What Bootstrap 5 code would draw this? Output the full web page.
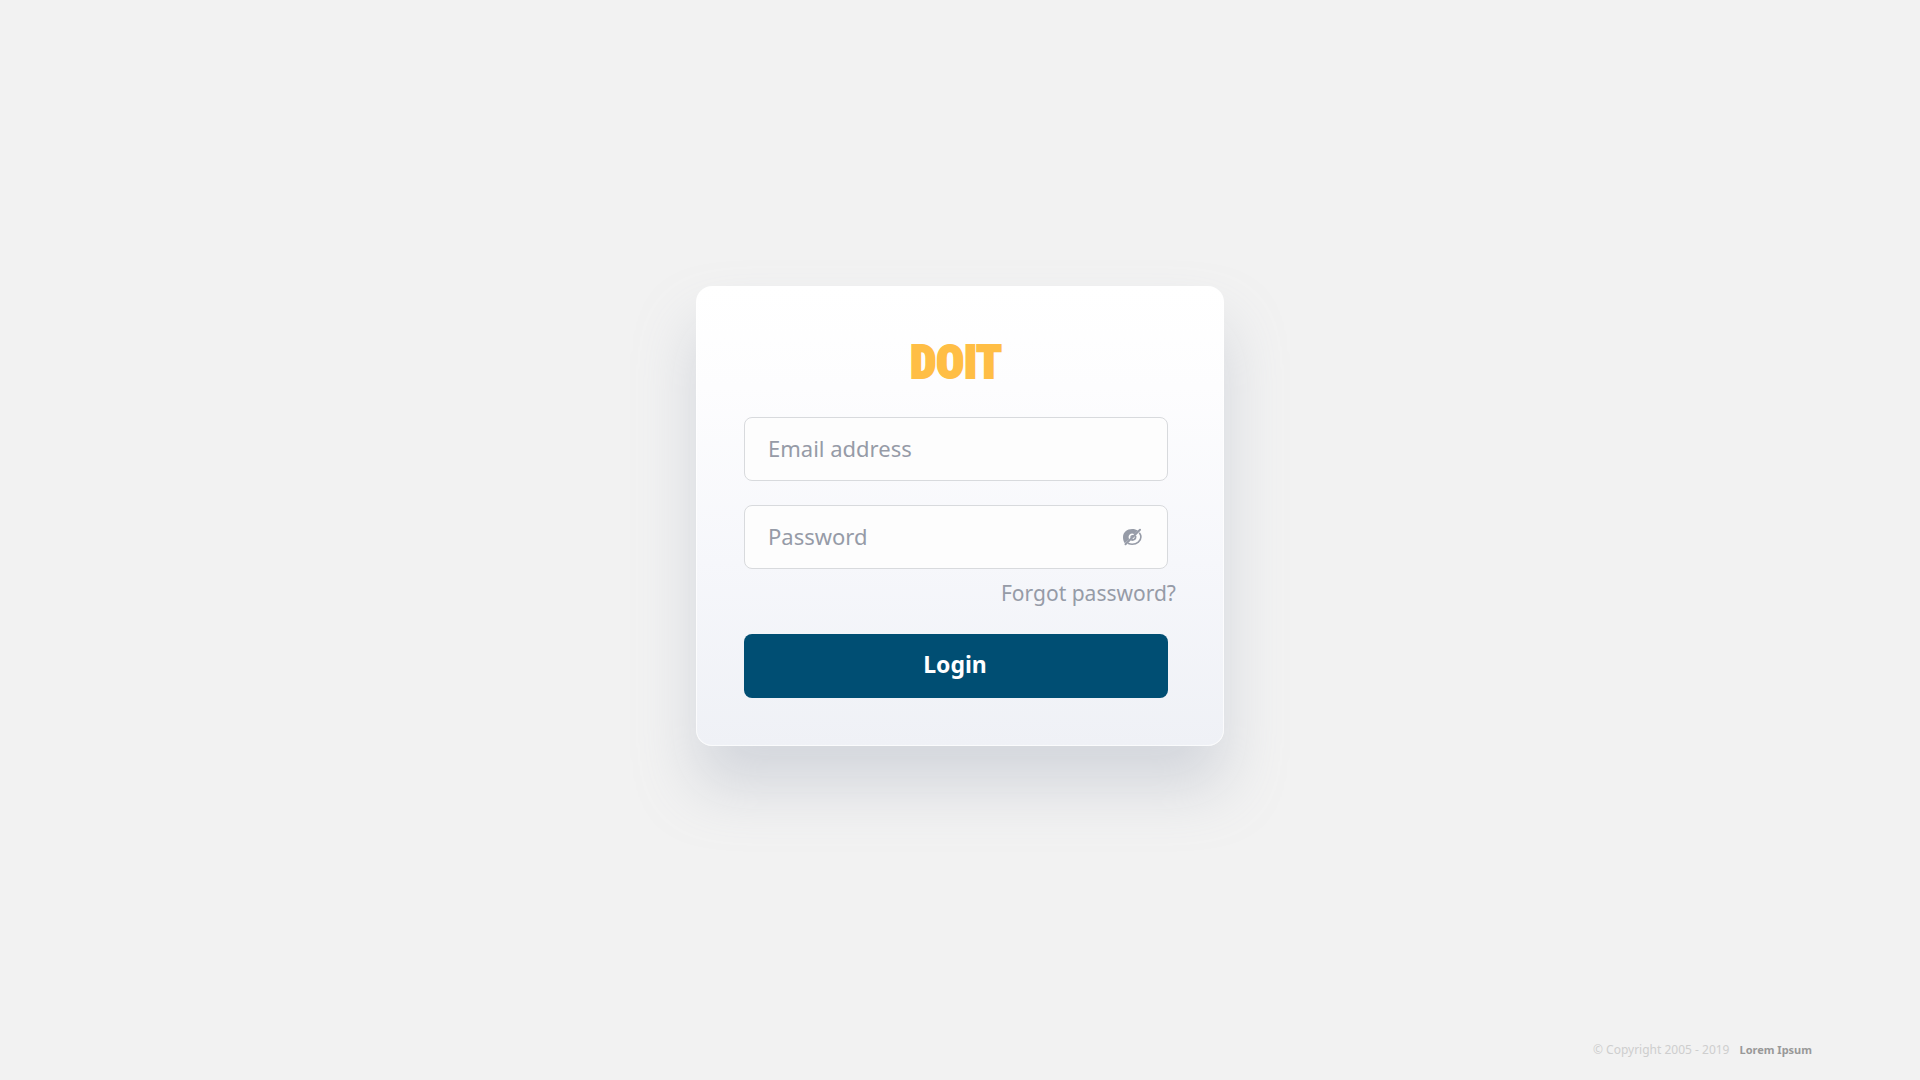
<!DOCTYPE html>
<html lang="en">
<head>
<meta charset="utf-8">
<meta name="viewport" content="width=device-width, initial-scale=1">
<title>DOIT - Login</title>
<link href="https://cdn.jsdelivr.net/npm/bootstrap@5.3.0/dist/css/bootstrap.min.css" rel="stylesheet">
<style>
  body { background: #f2f2f2; font-family: "Segoe UI", "Noto Sans", "Open Sans", sans-serif; }
  .login-card {
    width: 100%; max-width: 528px; padding: 47px;
    border: 1px solid rgba(255, 255, 255, .7); border-radius: 16px;
    background: linear-gradient(180deg, #fff 0%, #fdfdfe 22%, #f6f7fb 60%, #eff1f6 100%) border-box;
    box-shadow: 0 40px 60px rgba(153, 160, 180, .34);
  }
  .brand { font: 900 46px/56px "Noto Sans ExtraCondensed Black", "Noto Sans ExtraCondensed", "Roboto Condensed", Roboto, sans-serif; color: #ffbe45; -webkit-text-stroke: 2px #ffbe45; margin-bottom: 27px; }
  .field-wrap { margin-right: 8px; }
  .field-wrap .form-control {
    height: 64px; padding: 0 23px; font-size: 22px; border: 1px solid #d8dadd; border-radius: 8px;
    background: #fdfdfd; color: #4b5160;
  }
  .field-wrap .secret-input { padding-right: 64px; }
  .field-label { left: 24px; padding-bottom: 2px; font-size: 22px; line-height: 32px; color: #969ba7; }
  .form-control:not(:placeholder-shown) + .field-label { visibility: hidden; }
  .reveal-btn { right: 24px; color: #969ba7; line-height: 0; }
  .forgot-link { font-size: 21px; line-height: 28px; color: #969ba7; }
  .btn-login, .btn-login:hover { height: 64px; padding: 0 2px 4px 0; background: #004e73; color: #fff; font-size: 23px; font-weight: 700; border: 0; border-radius: 8px; }
  .forgot-row { padding: 10px 0 23px; }
  .page-foot { height: 48px; padding: 8px 108px 0; font-size: 12px; line-height: 20px; color: #cecece; gap: 10px; }
  .page-foot a { font-size: 11px; color: #999; }
</style>
<script src="https://cdn.jsdelivr.net/npm/bootstrap@5.3.0/dist/js/bootstrap.bundle.min.js" defer></script>
</head>
<body class="d-flex flex-column min-vh-100">
<main class="flex-grow-1 d-flex align-items-center justify-content-center">
  <form class="login-card">
    <h1 class="brand field-wrap text-center">DOIT</h1>
    <div class="field-wrap position-relative d-flex align-items-center mb-4">
      <input class="form-control" type="email" id="email" placeholder=" ">
      <label class="field-label position-absolute pe-none" for="email">Email address</label>
    </div>
    <div class="field-wrap position-relative d-flex align-items-center">
      <input class="form-control secret-input" type="password" id="password" placeholder=" ">
      <label class="field-label position-absolute pe-none" for="password">Password</label>
      <button type="button" class="reveal-btn btn p-0 border-0 position-absolute" aria-label="Show password">
        <svg width="24" height="24" viewBox="0 0 24 24" fill="none" stroke="currentColor" stroke-linecap="round">
          <path d="M4.800 18.200C3.600 16.700 3 14.500 3 12.200C3 7.200 7 4 12.200 4C14.500 4 16.400 4.600 17.900 5.600L14.300 9.200C12.800 8.200 10.900 8.300 9.700 9.500C8.400 10.700 8.300 12.700 9.200 14.200Z" fill="currentColor" stroke="none"/>
          <path d="M5.500 19.300L20 4.800" stroke-width="2"/>
          <path d="M19.600 8.300C20.500 9.500 20.900 10.800 20.900 12C20.900 16 17 19.300 12.200 19.300C10.800 19.300 9.600 19.100 8.500 18.600" stroke-width="1.600"/>
          <path d="M15.600 11.500C15.600 13.600 14 15 12 15" stroke-width="1.800"/>
          <path d="M11 12.300C10.900 11.300 11.700 10.700 12.700 10.800" stroke-width="1.400"/>
        </svg>
      </button>
    </div>
    <div class="forgot-row d-flex justify-content-end"><a href="#" class="forgot-link text-decoration-none">Forgot password?</a></div>
    <div class="field-wrap pt-1"><button type="submit" class="btn btn-login w-100">Login</button></div>
  </form>
</main>
<footer class="page-foot d-flex justify-content-end">
  <span>© Copyright 2005 - 2019</span>
  <a href="#" class="fw-bold text-decoration-none">Lorem Ipsum</a>
</footer>
</body>
</html>
